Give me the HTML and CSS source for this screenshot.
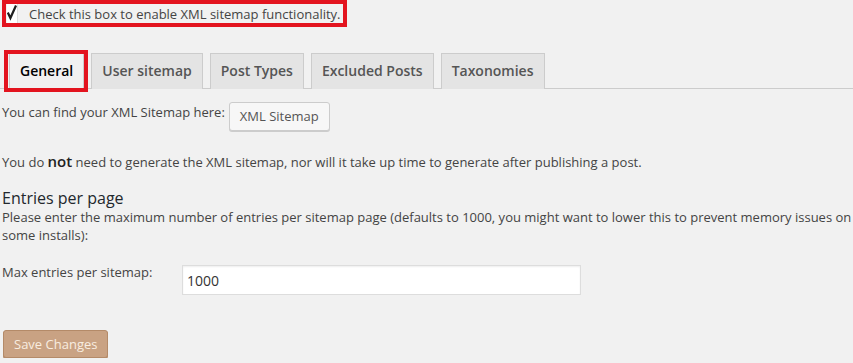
FILE: index.html
```html
<!DOCTYPE html>
<html lang="en">
<head>
    <meta charset="UTF-8">
    <title>XML Sitemap Settings</title>
    <link rel="stylesheet" href="styles.css">
</head>
<body>
    <div class="wrap">
        <!-- enable switch, outlined in red -->
        <label class="enable-box">
            <span class="check">
                <svg width="10" height="19" viewBox="0 0 10 19"><polyline points="0.8,8.5 3.4,14 9,1.5" fill="none" stroke="#1e1e1e" stroke-width="2.2"/></svg>
            </span>
            <span>Check this box to enable XML sitemap functionality.</span>
        </label>

        <nav class="nav-tabs">
            <a class="nav-tab active">General</a>
            <a class="nav-tab">User sitemap</a>
            <a class="nav-tab">Post Types</a>
            <a class="nav-tab">Excluded Posts</a>
            <a class="nav-tab">Taxonomies</a>
        </nav>

        <div class="find-row">
            <span>You can find your XML Sitemap here:</span>
            <a class="button">XML Sitemap</a>
        </div>

        <p class="note">You do <strong>not</strong> need to generate the XML sitemap, nor will it take up time to generate after publishing a post.</p>

        <h3 class="section-title">Entries per page</h3>
        <p class="desc">Please enter the maximum number of entries per sitemap page (defaults to 1000, you might want to lower this to prevent memory issues on some installs):</p>

        <div class="field-row">
            <label class="field-label">Max entries per sitemap:</label>
            <input class="text-input" type="text" value="1000">
        </div>

        <button class="save-button">Save Changes</button>
    </div>
</body>
</html>
```

FILE: styles.css
```css
body { margin: 0; padding: 0; background: #f1f1f1; font-family: 'Open Sans', 'Noto Sans', sans-serif; font-size: 13px; line-height: 18px; color: #444; }
.wrap { padding: 0 0 0 2px; }

/* top checkbox row with red annotation frame */
.enable-box { display: flex; align-items: center; width: 337px; height: 19px; border: 4px solid #e3141f; overflow: hidden; }
.enable-box .check { display: block; width: 10px; height: 19px; margin-left: 1px; margin-right: 11px; background: #fff; border-right: 1px solid #ddd; }
.enable-box .check svg { display: block; }

/* tabs */
.nav-tabs { display: flex; margin-top: 26px; border-bottom: 1px solid #ccc; margin-left: -2px; padding-left: 2px; }
.nav-tab { position: relative; margin-left: 7px; margin-bottom: -1px; padding: 5px 10px; border: 1px solid #ccc; border-bottom: none; background: #e4e4e4; color: #555; font-size: 14px; line-height: 24px; font-weight: 600; }
.nav-tab.active { background: #f1f1f1; color: #000; border-bottom: 1px solid #f1f1f1; }
.nav-tab.active::after { content: ""; position: absolute; top: -4px; left: -6px; right: -5px; bottom: -4px; border: 4px solid #e3141f; }

.find-row { display: flex; align-items: flex-start; gap: 4px; margin-top: 13px; }
.find-row span { margin-top: 1px; }
.button { display: inline-block; height: 26px; padding: 0 10px 1px; border: 1px solid #ccc; border-radius: 3px; background: #f7f7f7; box-shadow: 0 1px 0 #ccc; color: #555; line-height: 26px; }

.note { margin: 21px 0 0; }
.note strong { font-size: 15px; font-weight: 600; color: #222; }

.section-title { margin: 17px 0 0; font-size: 16px; line-height: 20px; font-weight: 400; color: #23282d; }
.desc { margin: 0; }

.field-row { display: flex; align-items: flex-start; margin-top: 19px; }
.field-label { width: 180px; }
.text-input { box-sizing: border-box; width: 399px; height: 30px; margin-top: 2px; padding: 0 4px; border: 1px solid #ddd; background: #fff; box-shadow: inset 0 1px 2px rgba(0, 0, 0, 0.07); font-family: 'Open Sans', 'Noto Sans', sans-serif; font-size: 14px; color: #333; }

.save-button { display: block; margin-top: 35px; margin-left: 1px; height: 28px; padding: 0 10px 1px; border: 1px solid #b48a68; border-radius: 3px; background: #c9a283; box-shadow: 0 1px 0 #b48a68; color: #f8ede0; font-family: 'Open Sans', 'Noto Sans', sans-serif; font-size: 13px; line-height: 26px; }
```
